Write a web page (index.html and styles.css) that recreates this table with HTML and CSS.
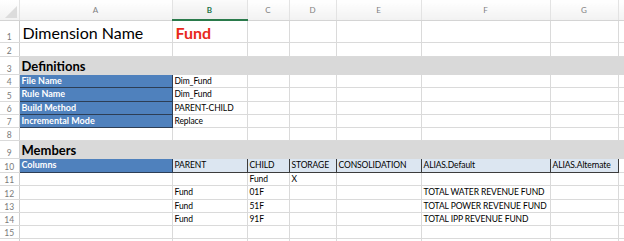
FILE: index.html
```html
<!DOCTYPE html>
<html lang="en">
<head>
  <meta charset="UTF-8" />
  <title>Dimension - Fund</title>
  <link rel="stylesheet" href="styles.css">
</head>
<body>
  <table class="sheet">
    <colgroup>
      <col class="c-num">
      <col class="c-a">
      <col class="c-b">
      <col class="c-c">
      <col class="c-d">
      <col class="c-e">
      <col class="c-f">
      <col class="c-g">
      <col class="c-rest">
    </colgroup>
    <thead>
      <tr class="col-heads">
        <th class="corner"><span class="corner-tri"></span></th>
        <th>A</th>
        <th class="active">B</th>
        <th>C</th>
        <th>D</th>
        <th>E</th>
        <th>F</th>
        <th>G</th>
        <th></th>
      </tr>
    </thead>
    <tbody>
      <tr class="r-title">
        <td class="num">1</td>
        <td class="title">Dimension Name</td>
        <td class="title red">Fund</td>
        <td></td><td></td><td></td><td></td><td></td><td></td>
      </tr>
      <tr class="r-14">
        <td class="num">2</td>
        <td></td><td></td><td></td><td></td><td></td><td></td><td></td><td></td>
      </tr>
      <tr class="r-section">
        <td class="num">3</td>
        <td class="section" colspan="8">Definitions</td>
      </tr>
      <tr>
        <td class="num">4</td>
        <td class="key">File Name</td>
        <td>Dim_Fund</td>
        <td></td><td></td><td></td><td></td><td></td><td></td>
      </tr>
      <tr class="r-14">
        <td class="num">5</td>
        <td class="key">Rule Name</td>
        <td>Dim_Fund</td>
        <td></td><td></td><td></td><td></td><td></td><td></td>
      </tr>
      <tr>
        <td class="num">6</td>
        <td class="key">Build Method</td>
        <td>PARENT-CHILD</td>
        <td></td><td></td><td></td><td></td><td></td><td></td>
      </tr>
      <tr>
        <td class="num">7</td>
        <td class="key">Incremental Mode</td>
        <td>Replace</td>
        <td></td><td></td><td></td><td></td><td></td><td></td>
      </tr>
      <tr>
        <td class="num">8</td>
        <td></td><td></td><td></td><td></td><td></td><td></td><td></td><td></td>
      </tr>
      <tr class="r-section">
        <td class="num">9</td>
        <td class="section" colspan="8">Members</td>
      </tr>
      <tr class="r-14">
        <td class="num">10</td>
        <td class="key">Columns</td>
        <td class="field">PARENT</td>
        <td class="field">CHILD</td>
        <td class="field">STORAGE</td>
        <td class="field">CONSOLIDATION</td>
        <td class="field">ALIAS.Default</td>
        <td class="field">ALIAS.Alternate</td>
        <td></td>
      </tr>
      <tr>
        <td class="num">11</td>
        <td></td><td></td>
        <td>Fund</td>
        <td>X</td>
        <td></td><td></td><td></td><td></td>
      </tr>
      <tr class="r-14">
        <td class="num">12</td>
        <td></td>
        <td>Fund</td>
        <td>01F</td>
        <td></td><td></td>
        <td>TOTAL WATER REVENUE FUND</td>
        <td></td><td></td>
      </tr>
      <tr>
        <td class="num">13</td>
        <td></td>
        <td>Fund</td>
        <td>51F</td>
        <td></td><td></td>
        <td>TOTAL POWER REVENUE FUND</td>
        <td></td><td></td>
      </tr>
      <tr>
        <td class="num">14</td>
        <td></td>
        <td>Fund</td>
        <td>91F</td>
        <td></td><td></td>
        <td>TOTAL IPP REVENUE FUND</td>
        <td></td><td></td>
      </tr>
      <tr>
        <td class="num">15</td>
        <td></td><td></td><td></td><td></td><td></td><td></td><td></td><td></td>
      </tr>
      <tr>
        <td class="num"></td>
        <td></td><td></td><td></td><td></td><td></td><td></td><td></td><td></td>
      </tr>
    </tbody>
  </table>
</body>
</html>
```

FILE: styles.css
```css
/* Spreadsheet page */
body {
  margin: 0;
  background: #ffffff;
  overflow: hidden;
  font-family: Lato, 'Liberation Sans', sans-serif;
  color: #000;
}

.sheet {
  border-collapse: collapse;
  table-layout: fixed;
  width: 624px;
}

.c-num { width: 19px; }
.c-a { width: 153px; }
.c-b { width: 75px; }
.c-c { width: 42px; }
.c-d { width: 47px; }
.c-e { width: 85px; }
.c-f { width: 129px; }
.c-g { width: 68px; }
.c-rest { width: 6px; }

/* Column letters */
.col-heads { height: 20px; }
.col-heads th {
  padding: 0;
  font-size: 8px;
  line-height: 10px;
  font-weight: normal;
  color: #808080;
  background: linear-gradient(to bottom, #ffffff, #f2f2f2);
  border-right: 1px solid #e3e3e3;
  border-bottom: 1px solid #d4d4d4;
}
.col-heads th.active {
  color: #217346;
  background: linear-gradient(to bottom, #fbfbfb, #ececec);
  border-bottom: 2px solid #2a7a4b;
  font-weight: bold;
}
.corner {
  position: relative;
}
.corner-tri {
  position: absolute;
  right: 2px;
  bottom: 2px;
  width: 0;
  height: 0;
  border-left: 12px solid transparent;
  border-bottom: 12px solid #dcdcdc;
}

/* Rows */
tr { height: 13px; }
tr.r-14 { height: 14px; }
tr.r-title { height: 22px; }
tr.r-section { height: 18px; }

td {
  padding: 0 0 0 2px;
  font-size: 8.5px;
  line-height: 10px;
  letter-spacing: -0.1px;
  vertical-align: middle;
  white-space: nowrap;
  overflow: visible;
  border: 1px solid #dadada;
}

td.num {
  padding: 0;
  text-align: center;
  font-size: 8.5px;
  letter-spacing: 0;
  color: #7a7a7a;
  border-left: none;
  border-right: 1px solid #cfcfcf;
  vertical-align: bottom;
}

.title {
  font-size: 16px;
  line-height: 18px;
  letter-spacing: 0;
  padding-left: 3px;
  vertical-align: bottom;
}
.title.red {
  color: #e8291c;
  font-weight: bold;
}

.section {
  background: #d9d9d9;
  font-weight: bold;
  font-size: 13px;
  line-height: 15px;
  letter-spacing: 0;
  border-color: #d9d9d9;
  border-right: none;
  vertical-align: bottom;
}

.key {
  background: #4f81bd;
  color: #ffffff;
  font-weight: bold;
  font-size: 9px;
  letter-spacing: 0;
  border: 1px solid #2d3e55;
}

.field {
  background: #dce6f1;
  border: 1px solid #3c3c3c;
}
```
